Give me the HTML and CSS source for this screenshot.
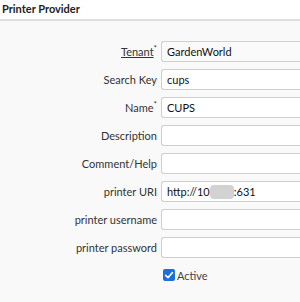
FILE: index.html
```html
<!DOCTYPE html>
<html lang="en">
<head>
    <meta charset="UTF-8">
    <title>Printer Provider</title>
    <link rel="stylesheet" href="styles.css">
</head>
<body>
    <div class="title-bar">Printer Provider</div>

    <!-- Record form -->
    <div class="form">
        <div class="form-row">
            <label class="field-label"><a href="#" class="lookup">Tenant</a><sup>*</sup></label>
            <div class="field-input readonly">GardenWorld</div>
        </div>
        <div class="form-row">
            <label class="field-label">Search Key</label>
            <div class="field-input">cups</div>
        </div>
        <div class="form-row">
            <label class="field-label">Name<sup>*</sup></label>
            <div class="field-input">CUPS</div>
        </div>
        <div class="form-row">
            <label class="field-label">Description</label>
            <div class="field-input"></div>
        </div>
        <div class="form-row">
            <label class="field-label">Comment/Help</label>
            <div class="field-input"></div>
        </div>
        <div class="form-row">
            <label class="field-label">printer URI</label>
            <div class="field-input">http://10<span class="masked"></span>:631</div>
        </div>
        <div class="form-row">
            <label class="field-label">printer username</label>
            <div class="field-input"></div>
        </div>
        <div class="form-row">
            <label class="field-label">printer password</label>
            <div class="field-input"></div>
        </div>
        <div class="form-row">
            <span></span>
            <label class="check">
                <span class="check-box">
                    <svg width="12" height="12" viewBox="0 0 12 12"><path d="M2.6 6.4 L5 8.6 L9.5 3.5" fill="none" stroke="#fff" stroke-width="1.6" stroke-linecap="round" stroke-linejoin="round"/></svg>
                </span>
                Active
            </label>
        </div>
    </div>
</body>
</html>
```

FILE: styles.css
```css
/* General */
body {
    margin: 0;
    overflow: hidden;
    font-family: 'Lato', sans-serif;
    font-size: 11px;
    color: #333;
    background-color: #f9f9f9;
}

.title-bar {
    height: 19px;
    line-height: 18px;
    padding: 0 2px;
    font-weight: bold;
    color: #222;
    background-color: #fff;
    border-bottom: 2px solid #dedede;
}

/* Form rows */
.form {
    padding-top: 20px;
}

.form-row {
    display: grid;
    grid-template-columns: 157px 1fr;
    column-gap: 4px;
    align-items: center;
    height: 20px;
    margin-bottom: 8px;
}

.field-label {
    text-align: right;
    white-space: nowrap;
}

.field-label sup {
    font-size: 8px;
    line-height: 0;
    vertical-align: 5px;
}

.lookup {
    color: #333;
}

.field-input {
    box-sizing: border-box;
    height: 21px;
    line-height: 19px;
    padding: 0 5px;
    color: #111;
    background-color: #fff;
    border: 1px solid #cfcfcf;
    border-right: none;
    border-radius: 3px 0 0 3px;
    white-space: nowrap;
    overflow: hidden;
}

.field-input.readonly {
    background-color: #fafafa;
}

.masked {
    display: inline-block;
    width: 24px;
    height: 14px;
    vertical-align: -3px;
    background-color: #d2d2d2;
    border-radius: 4px;
}

/* Checkbox */
.check {
    display: flex;
    align-items: center;
    gap: 2px;
    color: #444;
}

.check-box {
    display: flex;
    align-items: center;
    justify-content: center;
    width: 12px;
    height: 12px;
    margin-left: 2px;
    background-color: #1a6fe0;
    border-radius: 2px;
}
```
